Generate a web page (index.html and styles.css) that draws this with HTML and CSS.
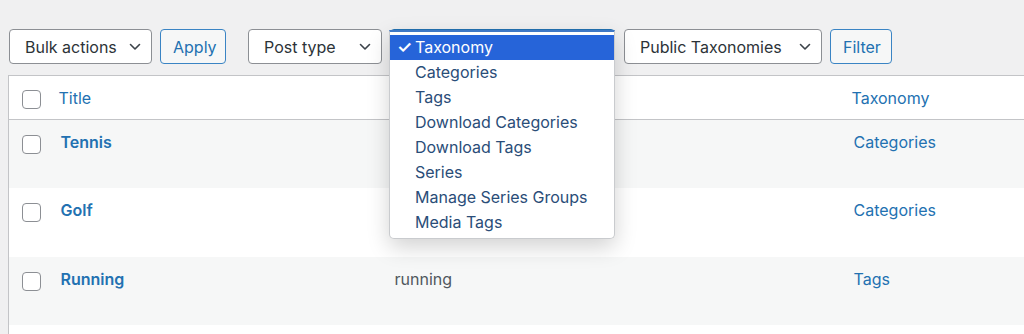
FILE: index.html
```html
<!DOCTYPE html>
<html lang="en">
<head>
    <meta charset="UTF-8">
    <meta name="viewport" content="width=device-width, initial-scale=1.0">
    <title>Taxonomies</title>
    <link rel="stylesheet" href="styles.css">
</head>
<body>
    <div class="tablenav">
        <div class="select bulk">
            <span>Bulk actions</span>
            <svg class="chevron" width="12" height="8" viewBox="0 0 12 8"><path d="M1.5 1.5 L6 6 L10.5 1.5" fill="none" stroke="#3c434a" stroke-width="1.6" stroke-linecap="round" stroke-linejoin="round"/></svg>
        </div>
        <button type="button" class="button apply">Apply</button>

        <div class="select posttype">
            <span>Post type</span>
            <svg class="chevron" width="12" height="8" viewBox="0 0 12 8"><path d="M1.5 1.5 L6 6 L10.5 1.5" fill="none" stroke="#3c434a" stroke-width="1.6" stroke-linecap="round" stroke-linejoin="round"/></svg>
        </div>
        <!-- open taxonomy select, the menu covers its label -->
        <div class="select taxonomy open">
            <ul class="menu">
                <li class="selected"><span class="tick">✓</span>Taxonomy</li>
                <li>Categories</li>
                <li>Tags</li>
                <li>Download Categories</li>
                <li>Download Tags</li>
                <li>Series</li>
                <li>Manage Series Groups</li>
                <li>Media Tags</li>
            </ul>
        </div>
        <div class="select public">
            <span>Public Taxonomies</span>
            <svg class="chevron" width="12" height="8" viewBox="0 0 12 8"><path d="M1.5 1.5 L6 6 L10.5 1.5" fill="none" stroke="#3c434a" stroke-width="1.6" stroke-linecap="round" stroke-linejoin="round"/></svg>
        </div>
        <button type="button" class="button filter">Filter</button>
    </div>

    <table class="list">
        <colgroup>
            <col class="col-cb">
            <col class="col-title">
            <col class="col-slug">
            <col class="col-tax">
        </colgroup>
        <thead>
            <tr>
                <td class="cb"><span class="check"></span></td>
                <th><a href="#">Title</a></th>
                <th></th>
                <th><a href="#">Taxonomy</a></th>
            </tr>
        </thead>
        <tbody>
            <tr>
                <td class="cb"><span class="check"></span></td>
                <td class="title"><a href="#">Tennis</a></td>
                <td class="slug"></td>
                <td class="tax"><a href="#">Categories</a></td>
            </tr>
            <tr>
                <td class="cb"><span class="check"></span></td>
                <td class="title"><a href="#">Golf</a></td>
                <td class="slug"></td>
                <td class="tax"><a href="#">Categories</a></td>
            </tr>
            <tr>
                <td class="cb"><span class="check"></span></td>
                <td class="title"><a href="#">Running</a></td>
                <td class="slug">running</td>
                <td class="tax"><a href="#">Tags</a></td>
            </tr>
            <tr>
                <td class="cb"></td>
                <td></td>
                <td></td>
                <td></td>
            </tr>
        </tbody>
    </table>
</body>
</html>
```

FILE: styles.css
```css
body {
    margin: 0;
    background-color: #f0f0f1;
    font-family: Inter, "Noto Sans", sans-serif;
    font-size: 16px;
    color: #2c3338;
    overflow: hidden;
}
a {
    color: #2271b1;
    text-decoration: none;
}
.tablenav {
    display: flex;
    align-items: center;
    padding: 29px 0 0 9px;
    height: 35px;
}
.select {
    position: relative;
    box-sizing: border-box;
    height: 35px;
    display: flex;
    align-items: center;
    justify-content: space-between;
    padding: 0 10px 0 15px;
    background-color: #fff;
    border: 1px solid #8c8f94;
    border-radius: 4px;
    color: #2c3338;
}
.chevron {
    display: block;
}
.bulk {
    width: 143px;
}
.posttype {
    width: 134px;
    margin-left: 22px;
}
.taxonomy {
    width: 225px;
    margin-left: 8px;
    border-color: #2271b1;
}
.public {
    width: 198px;
    margin-left: 9px;
}
.button {
    box-sizing: border-box;
    height: 35px;
    padding: 0 12px;
    margin-left: 8px;
    font-family: inherit;
    font-size: 16px;
    color: #2271b1;
    background-color: #f6f7f7;
    border: 1px solid #3a84c4;
    border-radius: 4px;
}
.apply {
    width: 66px;
}
.filter {
    width: 62px;
}
.menu {
    position: absolute;
    z-index: 5;
    top: 0;
    left: -2px;
    box-sizing: border-box;
    width: 226px;
    margin: 0;
    padding: 3px 0 3px;
    list-style: none;
    background-color: #fff;
    border: 1px solid #c9cbce;
    border-top: 2px solid #3f78c6;
    border-radius: 0 0 5px 5px;
    box-shadow: 0 8px 22px rgba(0, 0, 0, 0.18);
}
.menu li {
    position: relative;
    height: 25px;
    line-height: 25px;
    padding-left: 25px;
    color: #2a4d78;
}
.menu li.selected {
    background-color: #2664d9;
    color: #fff;
}
.tick {
    position: absolute;
    left: 7px;
    font-size: 17px;
    font-weight: 600;
}
.list {
    margin: 11px 0 0 8px;
    width: 1080px;
    table-layout: fixed;
    border-collapse: collapse;
    border: 1px solid #c3c4c7;
    background-color: #fff;
}
.col-cb {
    width: 50px;
}
.col-title {
    width: 336px;
}
.col-slug {
    width: 457px;
}
.list th,
.list td {
    padding: 0;
    text-align: left;
    vertical-align: top;
    font-weight: normal;
    line-height: 20px;
}
.list thead tr {
    height: 44px;
    border-bottom: 1px solid #c3c4c7;
}
.list thead th {
    padding-top: 12px;
}
.list thead td.cb {
    padding-top: 14px;
}
.list tbody tr {
    height: 68px;
}
.list tbody tr:nth-child(2) {
    height: 69px;
}
.list tbody tr:nth-child(odd) {
    background-color: #f6f7f7;
}
.list tbody td {
    padding-top: 12px;
}
.list tbody td.cb {
    padding-top: 15px;
}
.cb {
    padding-left: 13px !important;
}
.check {
    display: block;
    box-sizing: border-box;
    width: 19px;
    height: 19px;
    background-color: #fff;
    border: 1px solid #8c8f94;
    border-radius: 4px;
}
.title {
    padding-left: 2px !important;
    font-weight: 600 !important;
}
.slug {
    color: #50575e;
}
.tax {
    padding-left: 2px !important;
}
```
